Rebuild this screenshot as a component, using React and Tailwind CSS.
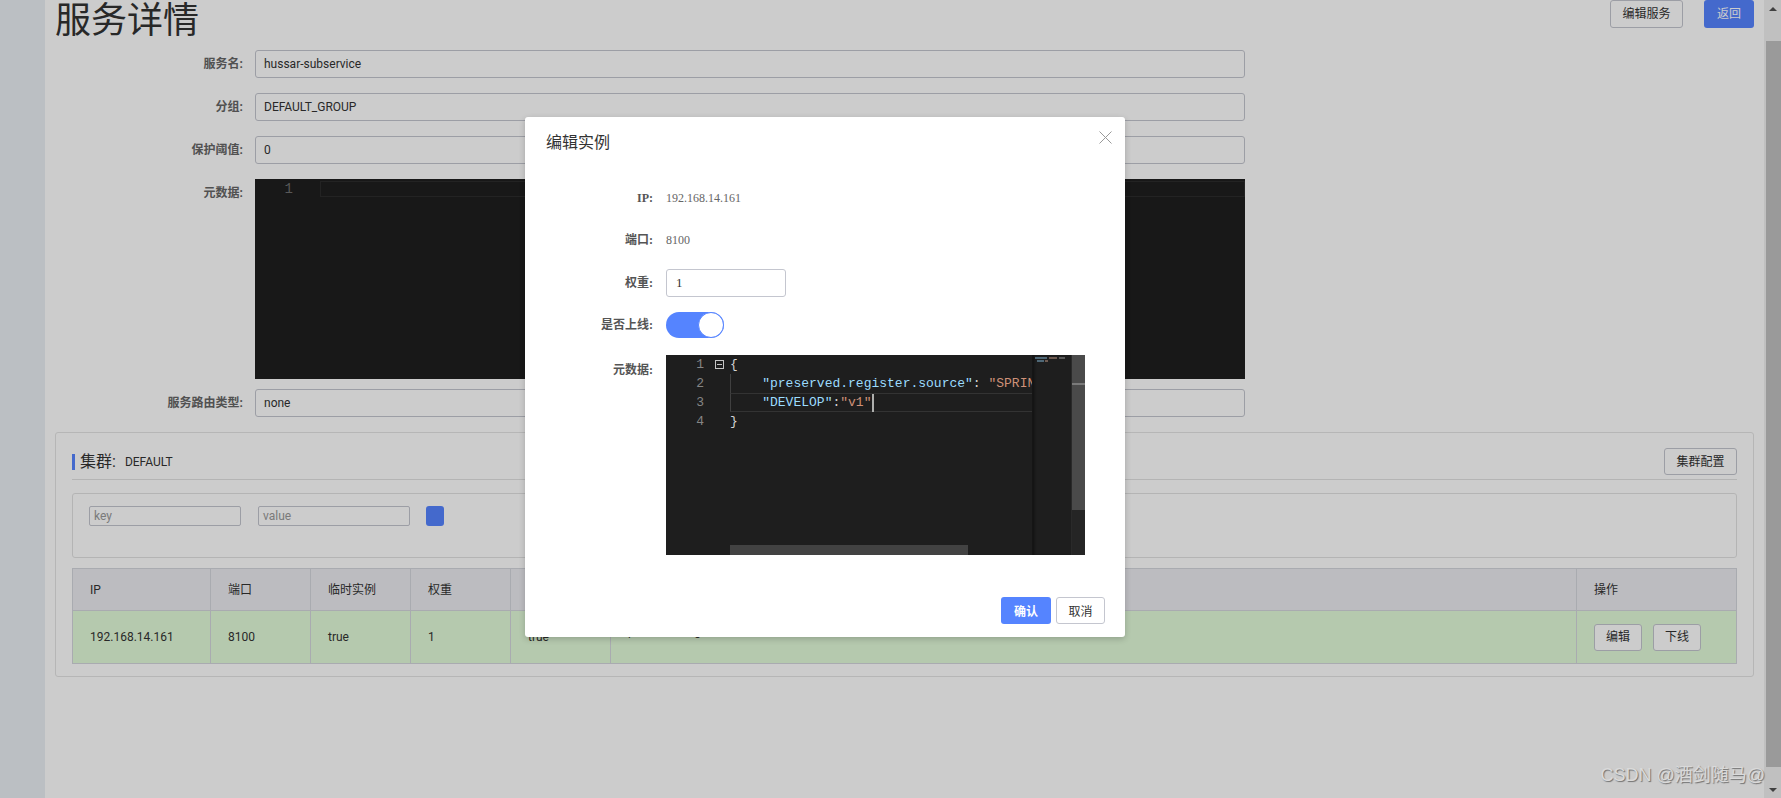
import React from "react";

function FormRow({ label, children, top = false, className = "" }) {
  return (
    <div className={`flex ${top ? "items-start" : "items-center"} ${className}`}>
      <label className="w-[188px] shrink-0 text-right text-[12px] leading-[28px] font-bold text-[#666]">{label}:</label>
      <div className="ml-[12px]">{children}</div>
    </div>
  );
}

function TextBox({ value }) {
  return (
    <div className="flex h-[28px] w-[990px] items-center rounded-[3px] border border-[#c4c6cf] bg-white pl-[8px] text-[12px] text-[#333]">
      {value}
    </div>
  );
}

function PageEditor() {
  return (
    <div className="flex h-[200px] w-[990px] bg-[#1e1e1e]">
      <div className="w-[38px] shrink-0 pt-[2px] text-right font-['Liberation_Mono',monospace] text-[14px] leading-[16px] text-[#6e6e6e]">1</div>
      <div className="ml-[27px] mt-[2px] h-[16px] flex-1 border border-[#2c2c2c]" />
    </div>
  );
}

function Btn({ children, className = "" }) {
  return (
    <button className={`flex h-[27px] items-center justify-center rounded-[3px] border border-[#c4c6cf] bg-white text-[12px] text-[#333] ${className}`}>
      {children}
    </button>
  );
}

function ClusterBox() {
  const cols = [
    ["IP", "w-[138px]", "192.168.14.161"],
    ["端口", "w-[100px]", "8100"],
    ["临时实例", "w-[100px]", "true"],
    ["权重", "w-[100px]", "1"],
    ["健康状态", "w-[100px]", "true"],
  ];
  return (
    <div className="mt-[15px] rounded-[3px] border border-[#e4e4e4] px-[16px] pb-[12px] pt-[15px]">
      <div className="flex items-center justify-between border-b border-[#e2e2e2] pb-[4px]">
        <div className="flex items-center">
          <span className="h-[16px] w-[3px] bg-[#5584ff]" />
          <span className="ml-[5px] text-[16px] text-[#333]">集群:</span>
          <span className="ml-[9px] text-[12px] text-[#333]">DEFAULT</span>
        </div>
        <Btn className="w-[73px]">集群配置</Btn>
      </div>

      <div className="mt-[13px] h-[65px] rounded-[3px] border border-[#e2e2e2] px-[16px] pt-[12px]">
        <div className="flex items-center">
          <div className="flex h-[20px] w-[152px] items-center rounded-[2px] border border-[#c4c6cf] pl-[4px] text-[12px] text-[#999]">key</div>
          <div className="ml-[17px] flex h-[20px] w-[152px] items-center rounded-[2px] border border-[#c4c6cf] pl-[4px] text-[12px] text-[#999]">value</div>
          <div className="ml-[16px] h-[20px] w-[18px] rounded-[3px] bg-[#5584ff]" />
        </div>
      </div>

      <table className="mt-[10px] w-full table-fixed border-collapse border border-[#d4d6dd] text-[12px] text-[#333]">
        <thead>
          <tr className="h-[42px] bg-[#ebecf0]">
            {cols.map(([h, w]) => (
              <th key={h} className={`${w} border border-[#d4d6dd] pl-[17px] text-left font-normal`}>{h}</th>
            ))}
            <th className="w-[966px] border border-[#d4d6dd] pl-[17px] text-left font-normal">元数据</th>
            <th className="w-[160px] border border-[#d4d6dd] pl-[17px] text-left font-normal">操作</th>
          </tr>
        </thead>
        <tbody>
          <tr className="h-[53px] bg-[#e3fcda]">
            {cols.map(([h, w, v]) => (
              <td key={h} className="border border-[#d4d6dd] pl-[17px]">{v}</td>
            ))}
            <td className="border border-[#d4d6dd] pb-[12px] pl-[17px]">preserved.register.source=SPRING_CLOUD</td>
            <td className="border border-[#d4d6dd] pl-[17px]">
              <div className="flex gap-[11px]">
                <Btn className="w-[48px]">编辑</Btn>
                <Btn className="w-[48px]">下线</Btn>
              </div>
            </td>
          </tr>
        </tbody>
      </table>
    </div>
  );
}

function ScrollBar() {
  return (
    <div className="flex w-[17px] shrink-0 flex-col bg-[#f1f1f1]">
      <div className="flex h-[17px] items-center justify-center">
        <span className="h-0 w-0 border-x-[4px] border-b-[4px] border-x-transparent border-b-[#505050]" />
      </div>
      <div className="h-[24px]" />
      <div className="ml-[2px] h-[726px] w-[15px] bg-[#c1c1c1]" />
      <div className="flex-1" />
      <div className="flex h-[17px] items-center justify-center">
        <span className="h-0 w-0 border-x-[4px] border-t-[4px] border-x-transparent border-t-[#505050]" />
      </div>
    </div>
  );
}

function CodeEditor() {
  const key = "text-[#9cdcfe]";
  const str = "text-[#ce9178]";
  const pun = "text-[#d4d4d4]";
  return (
    <div className="flex h-[200px] w-[419px] bg-[#1e1e1e] font-['Liberation_Mono',monospace] text-[13px] leading-[19px]">
      <div className="flex w-[64px] shrink-0">
        <div className="w-[38px] text-right text-[#858585]">
          <div>1</div>
          <div>2</div>
          <div>3</div>
          <div>4</div>
        </div>
        <div className="ml-[11px] pt-[5px]">
          <div className="flex h-[9px] w-[9px] items-center justify-center border border-[#c5c5c5]">
            <span className="h-[1px] w-[5px] bg-[#c5c5c5]" />
          </div>
        </div>
      </div>
      <div className="relative w-[302px] shrink-0 overflow-hidden whitespace-pre">
        <div className={pun}>{"{"}</div>
        <div className="border-l border-[#404040]">
          <span>{"    "}</span>
          <span className={key}>"preserved.register.source"</span>
          <span className={pun}>: </span>
          <span className={str}>"SPRING_CLOUD"</span>
          <span className={pun}>,</span>
        </div>
        <div className="flex h-[19px] items-center border-y border-l border-[#333333] border-l-[#404040]">
          <span>{"    "}</span>
          <span className={key}>"DEVELOP"</span>
          <span className={pun}>:</span>
          <span className={str}>"v1"</span>
          <span className="ml-[1px] h-[18px] w-[2px] bg-[#aeafad]" />
        </div>
        <div className={pun}>{"}"}</div>
        <div className="absolute bottom-0 left-0 h-[10px] w-[238px] bg-[#424242]" />
      </div>
      <div className="w-[39px] shrink-0 border-l border-[#151515] pt-[2px] shadow-[inset_2px_0_3px_-1px_rgba(0,0,0,0.5)]">
        <div className="ml-[2px] flex gap-[2px]">
          <span className="h-[2px] w-[12px] bg-[#4f6877]" />
          <span className="h-[2px] w-[8px] bg-[#6e5a50]" />
          <span className="h-[2px] w-[6px] bg-[#5a5a5a]" />
        </div>
        <div className="ml-[4px] mt-[1px] flex gap-[1px]">
          <span className="h-[2px] w-[7px] bg-[#4f6877]" />
          <span className="h-[2px] w-[3px] bg-[#6e5a50]" />
        </div>
      </div>
      <div className="flex w-[14px] shrink-0 flex-col border-l border-[#2a2a2a]">
        <div className="h-[155px] bg-[#4a4a4a] pt-[28px]">
          <div className="h-[2px] w-full bg-[#7a7a7a]" />
        </div>
        <div className="flex-1 bg-[#252525]" />
      </div>
    </div>
  );
}

function ModalRow({ label, children, className = "" }) {
  return (
    <div className={`flex h-[28px] items-center ${className}`}>
      <div className="w-[128px] shrink-0 text-right text-[12px] font-bold text-[#555]">{label}:</div>
      <div className="ml-[13px] text-[12px] text-[#666]">{children}</div>
    </div>
  );
}

function Modal() {
  return (
    <div className="absolute left-[525px] top-[117px] h-[520px] w-[600px] rounded-[3px] bg-white shadow-[0_2px_6px_rgba(0,0,0,0.2)] font-['Liberation_Serif','Noto_Sans_CJK_SC',serif]">
      <div className="pl-[21px] pt-[12px] font-['Noto_Sans_CJK_SC',sans-serif] text-[16px] leading-[24px] text-[#333]">编辑实例</div>
      <svg className="absolute right-[13px] top-[14px]" width="13" height="13" viewBox="0 0 13 13">
        <path d="M0.5 0.5 L12.5 12.5 M12.5 0.5 L0.5 12.5" stroke="#999" strokeWidth="1" fill="none" />
      </svg>

      <div className="mt-[31px]">
        <ModalRow label="IP">192.168.14.161</ModalRow>
        <ModalRow label="端口" className="mt-[14px]">8100</ModalRow>
        <ModalRow label="权重" className="mt-[15px]">
          <div className="flex h-[28px] w-[120px] items-center rounded-[3px] border border-[#c4c6cf] pl-[9px] text-[13px] text-[#333]">1</div>
        </ModalRow>
        <ModalRow label="是否上线" className="mt-[14px]">
          <div className="flex h-[26px] w-[58px] items-center justify-end rounded-full bg-[#5584ff]">
            <div className="h-[26px] w-[26px] rounded-full border border-[#5584ff] bg-white" />
          </div>
        </ModalRow>
        <div className="mt-[16px] flex items-start">
          <div className="w-[128px] shrink-0 text-right text-[12px] font-bold leading-[30px] text-[#555]">元数据:</div>
          <div className="ml-[13px]">
            <CodeEditor />
          </div>
        </div>
      </div>

      <div className="mt-[42px] flex justify-end gap-[5px] pr-[20px] font-['Noto_Sans_CJK_SC',sans-serif]">
        <button className="h-[27px] w-[50px] rounded-[3px] bg-[#5584ff] text-[12px] font-bold text-white">确认</button>
        <button className="h-[27px] w-[49px] rounded-[3px] border border-[#c4c6cf] bg-white text-[12px] text-[#333]">取消</button>
      </div>
    </div>
  );
}

export default function App() {
  return (
    <div className="relative flex h-[798px] w-full overflow-hidden bg-white font-['Roboto','Noto_Sans_CJK_SC',sans-serif] text-[#333]">
      <aside className="w-[45px] shrink-0 bg-[#eaeff4]" />
      <main className="min-w-0 flex-1 px-[10px]">
        <div className="flex h-[43px] items-start justify-between">
          <h1 className="text-[36px] leading-[43px] font-normal text-[#333]">服务详情</h1>
          <div className="flex gap-[21px]">
            <Btn className="h-[28px] w-[73px]">编辑服务</Btn>
            <button className="h-[28px] w-[50px] rounded-[3px] bg-[#5584ff] text-[12px] text-white">返回</button>
          </div>
        </div>

        <div className="mt-[7px]">
          <FormRow label="服务名"><TextBox value="hussar-subservice" /></FormRow>
          <FormRow label="分组" className="mt-[15px]"><TextBox value="DEFAULT_GROUP" /></FormRow>
          <FormRow label="保护阈值" className="mt-[15px]"><TextBox value="0" /></FormRow>
          <FormRow label="元数据" top className="mt-[15px]"><PageEditor /></FormRow>
          <FormRow label="服务路由类型" className="mt-[10px]"><TextBox value="none" /></FormRow>
        </div>

        <ClusterBox />
      </main>
      <ScrollBar />

      <div className="absolute inset-0 bg-black/20" />
      <Modal />

      <div className="absolute bottom-[9px] right-[16px] font-['Liberation_Sans','Noto_Sans_CJK_SC',sans-serif] text-[18px] text-[#dadada] [text-shadow:1px_1px_1px_rgba(0,0,0,0.45)]">
        CSDN @酒剑随马@
      </div>
    </div>
  );
}
